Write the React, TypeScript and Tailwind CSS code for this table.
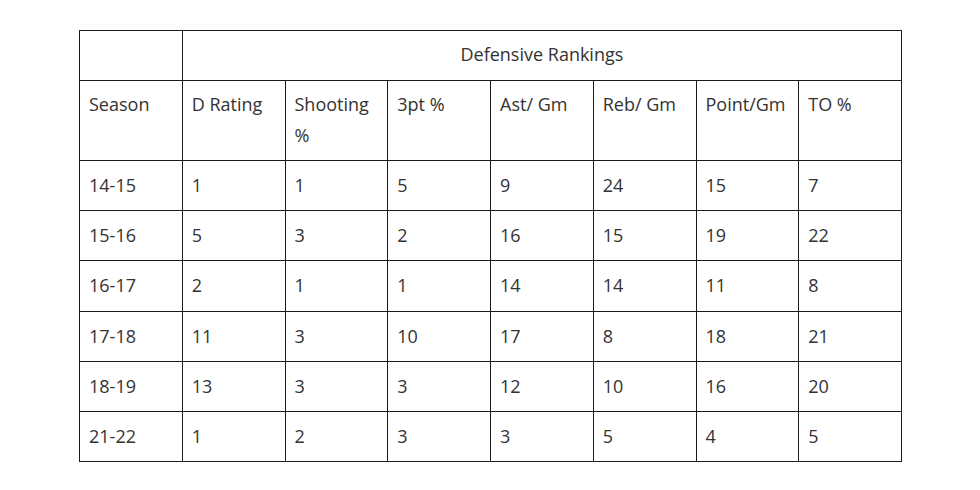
const headers = ['Season', 'D Rating', 'Shooting %', '3pt %', 'Ast/ Gm', 'Reb/ Gm', 'Point/Gm', 'TO %'];

const rows: string[][] = [
  ['14-15', '1', '1', '5', '9', '24', '15', '7'],
  ['15-16', '5', '3', '2', '16', '15', '19', '22'],
  ['16-17', '2', '1', '1', '14', '14', '11', '8'],
  ['17-18', '11', '3', '10', '17', '8', '18', '21'],
  ['18-19', '13', '3', '3', '12', '10', '16', '20'],
  ['21-22', '1', '2', '3', '3', '5', '4', '5'],
];

const cell = 'border border-[#1a1a1a] px-[9px] align-top text-left font-normal';

export default function App() {
  return (
    <div
      className="h-[490px] w-[980px] bg-white pl-[79px] pt-[30px] text-[18px] leading-[31px] text-[#333]"
      style={{ fontFamily: '"Open Sans", "Noto Sans", sans-serif' }}
    >
      <table className="w-[822px] table-fixed border-collapse">
        <colgroup>
          {headers.map((h) => (
            <col key={h} className="w-[102.75px]" />
          ))}
        </colgroup>
        <thead>
          <tr className="h-[50px]">
            <th className={cell}></th>
            <th colSpan={7} className="border border-[#1a1a1a] pt-[8px] pb-[10px] text-center align-top font-normal">
              Defensive Rankings
            </th>
          </tr>
          <tr className="h-[80px]">
            {headers.map((h) => (
              <th key={h} className={`${cell} pt-[8px]`}>
                {h}
              </th>
            ))}
          </tr>
        </thead>
        <tbody>
          {rows.map((r) => (
            <tr key={r[0]} className="h-[50.2px]">
              {r.map((v, i) => (
                <td key={i} className={`${cell} pt-[9px]`}>
                  {v}
                </td>
              ))}
            </tr>
          ))}
        </tbody>
      </table>
    </div>
  );
}
